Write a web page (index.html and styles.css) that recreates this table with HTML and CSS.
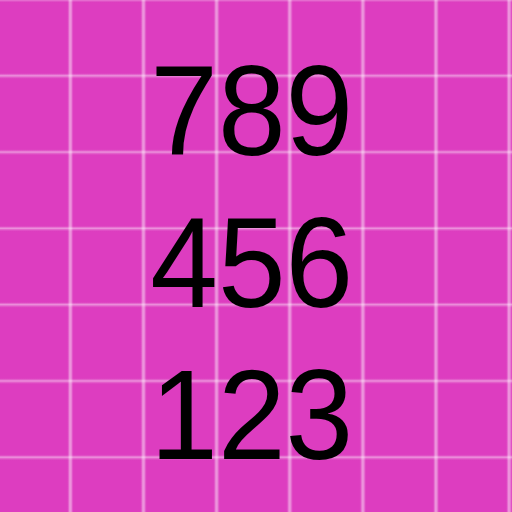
FILE: index.html
```html
<!DOCTYPE html>
<html>
<head>
<meta charset="utf-8">
<link rel="stylesheet" href="styles.css">
</head>
<body>
<main class="board">
  <div class="digits">
    <div class="row">789</div>
    <div class="row">456</div>
    <div class="row">123</div>
  </div>
</main>
</body>
</html>
```
FILE: styles.css
```css
html, body {
  margin: 0;
  padding: 0;
}
.board {
  width: 512px;
  height: 512px;
  background-color: #dd3dc0;
  background-image:
    linear-gradient(to right,
      rgba(255,255,255,0) 0,
      rgba(255,255,255,0) 67.5px,
      rgba(255,255,255,0.18) 68.5px,
      rgba(255,255,255,0.45) 69.5px,
      rgba(255,255,255,0.45) 71.2px,
      rgba(255,255,255,0.18) 72.2px,
      rgba(255,255,255,0) 73.14px),
    linear-gradient(to bottom,
      rgba(255,255,255,0.3) 0,
      rgba(255,255,255,0.1) 1.5px,
      rgba(255,255,255,0) 2.5px,
      rgba(255,255,255,0) 73.5px,
      rgba(255,255,255,0.18) 74.5px,
      rgba(255,255,255,0.45) 75.5px,
      rgba(255,255,255,0.45) 77.2px,
      rgba(255,255,255,0.18) 78.2px,
      rgba(255,255,255,0) 79.2px);
  background-size: 73.14px 100%, 100% 76.3px;
  background-repeat: repeat-x, repeat-y;
  display: flex;
  justify-content: center;
  box-sizing: border-box;
  padding-top: 35px;
  padding-right: 8px;
}
.digits {
  display: flex;
  flex-direction: column;
  align-items: center;
  font-family: "Liberation Sans", Arial, sans-serif;
  font-size: 128px;
  line-height: 152px;
  color: #000;
  transform: scaleX(0.95);
}
.row {
  height: 152px;
}
```
